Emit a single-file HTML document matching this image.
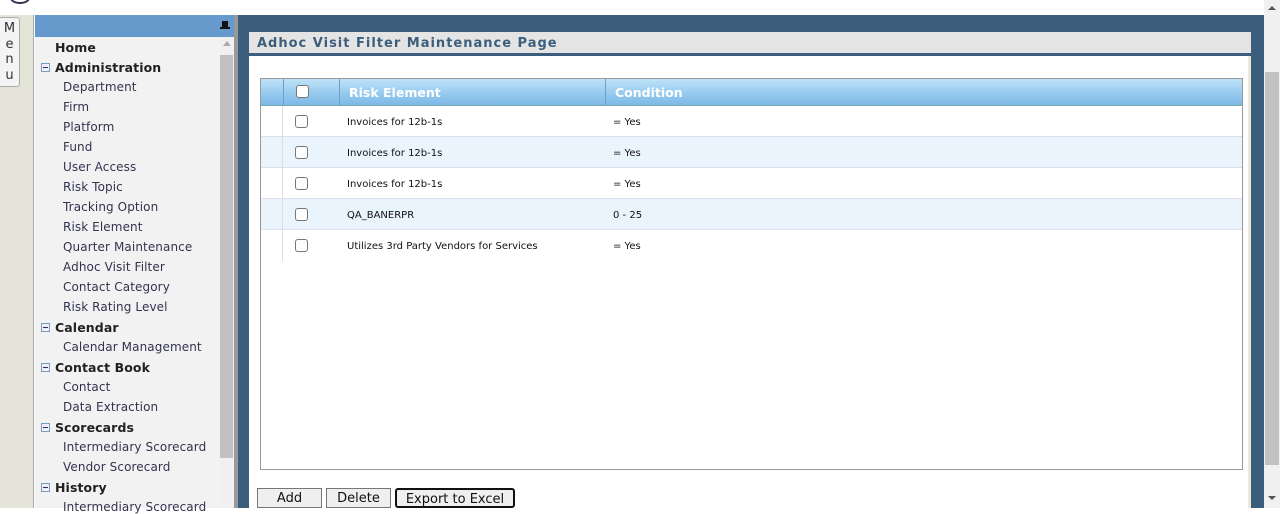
<!DOCTYPE html>
<html><head><style>
*{margin:0;padding:0;box-sizing:border-box}
body{width:1280px;height:508px;overflow:hidden;background:#fff;font-family:"DejaVu Sans","Liberation Sans",sans-serif;position:relative}
.abs{position:absolute}
.strip{left:0;top:15px;width:34px;height:493px;background:#e4e4d8;border-right:1px solid #aaa}
.menubtn{left:0;top:17px;width:20px;height:70px;background:#f4f4f4;border:1px solid #aaa;border-left:none;border-radius:0 3px 3px 0;font-size:13px;color:#333;text-align:center;line-height:15.5px;padding-top:3px}
.side{left:35px;top:15px;width:199px;height:493px;background:#f2f2f2}
.sidehdr{left:35px;top:15px;width:199px;height:22px;background:#6699cc}
.sb{left:220px;top:37px;width:14px;height:471px;background:#f0f0f0}
.sbt{left:220px;top:55px;width:13px;height:403px;background:#c1c1c1}
.div{left:234px;top:15px;width:4px;height:493px;background:#999}
.main{left:238px;top:15px;width:1026px;height:493px;background:#3b5e7c}
.item{position:absolute;font-size:12px;letter-spacing:0.1px;color:#333350;white-space:nowrap}
.sec{font-weight:bold;color:#222;font-size:12.5px}
.box{position:absolute;left:41px;width:9px;height:9px;border:1px solid #7c9cbc;background:#eef}
.box:after{content:"";position:absolute;left:1px;top:3px;width:5px;height:1px;background:#335}
.panel{left:249px;top:32px;width:1002px;height:476px;background:#fff;border-right:3px solid #ece8d8}
.ptitle{left:249px;top:32px;width:1002px;height:24px;background:#e4e4e4;border-bottom:3px solid #3b5e7c;font-weight:bold;font-size:13px;color:#3b5e7c;letter-spacing:1px;padding:4px 8px}
.tbl{left:260px;top:78px;width:983px;height:392px;border:1px solid #999;background:#fff}
.hdr{left:261px;top:79px;width:981px;height:27px;background:linear-gradient(#bfe2f8,#93c8ee 60%,#7db9e6);border-bottom:1px solid #7aa}
.hc{position:absolute;top:79px;height:27px;border-left:1px solid #6f9fcf;color:#fff;font-weight:bold;font-size:12.5px;padding:6px 9px}
.row{position:absolute;left:261px;width:981px;height:31px;border-bottom:1px solid #dde;font-size:10px;color:#111}
.row span{position:absolute;top:11px}
.cb{position:absolute;width:13px;height:13px;border:1px solid #777;border-radius:3px;background:#fff}
.vl{position:absolute;top:106px;width:1px;height:155px;background:#ddd}
.btn{position:absolute;top:488px;height:20px;background:#efefef;border:1px solid #777;font-size:13px;text-align:center;line-height:19px;color:#111}
.psb{left:1264px;top:0;width:16px;height:508px;background:#f0f0f0}
.pth{left:1265px;top:72px;width:14px;height:393px;background:#c1c1c1}
</style></head><body>
<div class="abs" style="left:10px;top:-8px;width:20px;height:12px;border:2px solid #335;border-radius:50%;border-top:none"></div>
<div class="abs strip"></div>
<div class="abs menubtn">M<br>e<br>n<br>u</div>
<div class="abs side"></div>
<div class="abs sidehdr"><div style="position:absolute;right:6px;top:6px;width:6px;height:8px;background:#111"></div><div style="position:absolute;right:4px;top:12px;width:10px;height:2px;background:#111"></div></div>
<div class="abs sb"></div><div class="abs sbt"></div>
<div style="position:absolute;left:223px;top:41px;border:4px solid transparent;border-bottom:5px solid #aaa;border-top:none"></div>
<div class="abs div"></div>
<div class="abs main"></div>

<div class="item sec" style="left:55px;top:40px">Home</div>
<div class="box" style="top:63px"></div><div class="item sec" style="left:55px;top:60px">Administration</div>
<div class="item" style="left:63px;top:80px">Department</div>
<div class="item" style="left:63px;top:100px">Firm</div>
<div class="item" style="left:63px;top:120px">Platform</div>
<div class="item" style="left:63px;top:140px">Fund</div>
<div class="item" style="left:63px;top:160px">User Access</div>
<div class="item" style="left:63px;top:180px">Risk Topic</div>
<div class="item" style="left:63px;top:200px">Tracking Option</div>
<div class="item" style="left:63px;top:220px">Risk Element</div>
<div class="item" style="left:63px;top:240px">Quarter Maintenance</div>
<div class="item" style="left:63px;top:260px">Adhoc Visit Filter</div>
<div class="item" style="left:63px;top:280px">Contact Category</div>
<div class="item" style="left:63px;top:300px">Risk Rating Level</div>
<div class="box" style="top:323px"></div><div class="item sec" style="left:55px;top:320px">Calendar</div>
<div class="item" style="left:63px;top:340px">Calendar Management</div>
<div class="box" style="top:363px"></div><div class="item sec" style="left:55px;top:360px">Contact Book</div>
<div class="item" style="left:63px;top:380px">Contact</div>
<div class="item" style="left:63px;top:400px">Data Extraction</div>
<div class="box" style="top:423px"></div><div class="item sec" style="left:55px;top:420px">Scorecards</div>
<div class="item" style="left:63px;top:440px">Intermediary Scorecard</div>
<div class="item" style="left:63px;top:460px">Vendor Scorecard</div>
<div class="box" style="top:483px"></div><div class="item sec" style="left:55px;top:480px">History</div>
<div class="item" style="left:63px;top:500px">Intermediary Scorecard</div>

<div class="abs panel"></div>
<div class="abs ptitle">Adhoc Visit Filter Maintenance Page</div>
<div class="abs tbl"></div>
<div class="abs hdr"></div>
<div class="hc" style="left:283px;width:56px"><div class="cb" style="left:12px;top:6px"></div></div>
<div class="hc" style="left:339px;width:266px">Risk Element</div>
<div class="hc" style="left:605px;width:637px">Condition</div>

<div class="row" style="top:106px;background:#fff"><span style="left:86px">Invoices for 12b-1s</span><span style="left:352px">= Yes</span></div>
<div class="row" style="top:137px;background:#eaf4fc"><span style="left:86px">Invoices for 12b-1s</span><span style="left:352px">= Yes</span></div>
<div class="row" style="top:168px;background:#fff"><span style="left:86px">Invoices for 12b-1s</span><span style="left:352px">= Yes</span></div>
<div class="row" style="top:199px;background:#eaf4fc"><span style="left:86px">QA_BANERPR</span><span style="left:352px">0 - 25</span></div>
<div class="row" style="top:230px;background:#fff;border-bottom:none"><span style="left:86px">Utilizes 3rd Party Vendors for Services</span><span style="left:352px">= Yes</span></div>
<div class="vl" style="left:282px"></div>
<div class="cb" style="left:295px;top:115px"></div>
<div class="cb" style="left:295px;top:146px"></div>
<div class="cb" style="left:295px;top:177px"></div>
<div class="cb" style="left:295px;top:208px"></div>
<div class="cb" style="left:295px;top:239px"></div>

<div class="btn" style="left:257px;width:65px">Add</div>
<div class="btn" style="left:326px;width:65px">Delete</div>
<div class="btn" style="left:395px;width:120px;border:2px solid #111;border-radius:3px">Export to Excel</div>

<div class="abs psb"></div><div class="abs pth"></div>
<div style="position:absolute;left:1268px;top:6px;border:4px solid transparent;border-bottom:4px solid #555;border-top:none"></div>
<div style="position:absolute;left:1268px;top:496px;border:4px solid transparent;border-top:4px solid #555;border-bottom:none"></div>
</body></html>
